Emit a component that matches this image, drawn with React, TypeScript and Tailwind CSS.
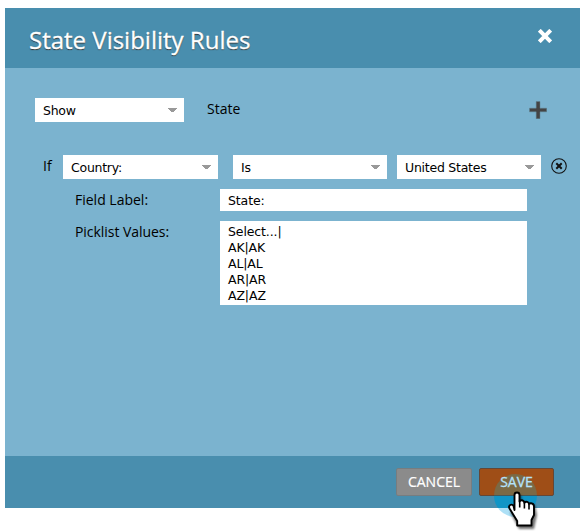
import React from "react";

function Select({ value, className }: { value: string; className: string }) {
  return (
    <div className={`flex h-6 items-center justify-between bg-white pl-2 pr-[7px] ${className}`}>
      <span className="whitespace-pre pt-0.5 font-['DejaVu_Sans',Verdana,sans-serif] text-[12.5px] leading-4 tracking-[-0.25px]">{value}</span>
      <svg width="9" height="4" viewBox="0 0 9 4" className="shrink-0" shapeRendering="crispEdges">
        <path d="M0 0h9v1H8v1H7v1H6v1H3V3H2V2H1V1H0z" fill="#999" />
      </svg>
    </div>
  );
}

const picklist = ["Select...|", "AK|AK", "AL|AL", "AR|AR", "AZ|AZ"];

export default function App() {
  return (
    <div className="relative h-[532px] w-[586px] overflow-hidden bg-white pl-[5px] pt-2 font-['Open_Sans','Noto_Sans',sans-serif] text-black">
      <div className="flex h-[500px] w-[575px] flex-col bg-[#7bb3cf]">
        <header className="flex h-[60px] shrink-0 items-center justify-between bg-[#498eae] pl-6 pr-7">
          <h1 className="pt-1 text-[24px] leading-8 text-white [-webkit-text-stroke:0.3px_white] [text-shadow:0px_1px_1px_#333]">State Visibility Rules</h1>
          <svg width="14" height="14" viewBox="0 0 14 14" className="-mt-1">
            <path d="M2.7 2.7L11.3 11.3M11.3 2.7L2.7 11.3" stroke="white" strokeWidth="4" strokeLinecap="square" />
          </svg>
        </header>

        <main className="flex grow flex-col pl-[30px] pt-[30px] text-[14px] leading-5">
          <div className="flex h-6 items-start">
            <Select value="Show" className="w-[149px]" />
            <span className="ml-[23px] w-[322px] pt-px">State</span>
            <svg width="18" height="18" viewBox="0 0 18 18" className="mt-[3px]">
              <path d="M7.2 .5h3.8v6.7h6.7v3.6H11v6.9H7.2v-6.9H.5V7.2h6.7z" fill="#444" stroke="#60808f" strokeWidth="0.5" />
            </svg>
          </div>

          <div className="mt-[33px] flex h-6 items-start pl-2">
            <span className="w-5 pt-px">If</span>
            <Select value="Country:" className="w-[155px]" />
            <Select value="Is" className="ml-[15px] w-[154px]" />
            <Select value="United States" className="ml-2.5 w-36" />
            <svg width="16" height="16" viewBox="0 0 16 16" className="ml-2.5 mt-[3px]">
              <circle cx="8" cy="8" r="7.3" fill="none" stroke="#111" strokeWidth="1.1" />
              <path d="M6 6l4 4M10 6l-4 4" stroke="#111" strokeWidth="2" strokeLinecap="square" />
            </svg>
          </div>

          <div className="mt-2.5 flex h-[22px] pl-10">
            <span className="w-[145px] pt-px">Field Label:</span>
            <div className="h-[22px] w-[307px] bg-white pl-2 pt-1 font-['DejaVu_Sans',Verdana,sans-serif] text-[12.5px] leading-4 tracking-[-0.12px]">State:</div>
          </div>
          <div className="mt-2.5 flex pl-10">
            <span className="w-[145px] pt-px tracking-[-0.05px]">Picklist Values:</span>
            <div className="h-[84px] w-[307px] bg-white pl-2 pt-[3px] font-['DejaVu_Sans',Verdana,sans-serif] text-[12.5px] leading-4 tracking-[-0.12px]">
              {picklist.map((item) => <div key={item}>{item}</div>)}
            </div>
          </div>
        </main>

        <footer className="flex h-[52px] shrink-0 justify-end gap-[7px] bg-[#498eae] pr-[26px] pt-3 text-[14px] leading-[26px] text-white">
          <button className="h-7 w-[76px] rounded-[2px] border border-[#777d80] bg-[#8b8b8b] leading-[26px] [-webkit-text-stroke:0.2px_white]">CANCEL</button>
          <button className="h-7 w-[75px] rounded-[2px] border border-[#644736] bg-[#9f4e17] leading-[26px]">
            <span className="relative z-10 text-[#b4e2fb] [-webkit-text-stroke:0.3px_#b4e2fb]">SAVE</span>
          </button>
        </footer>
      </div>

      <svg width="60" height="72" viewBox="485 460 60 72" className="pointer-events-none absolute left-[485px] top-[460px]">
        <defs>
          <clipPath id="halo"><circle cx="515.5" cy="495.5" r="21.5" /></clipPath>
          <filter id="soft" x="-30%" y="-30%" width="170%" height="170%"><feGaussianBlur stdDeviation="1.3" /></filter>
        </defs>
        <g clipPath="url(#halo)">
          <rect x="490" y="470" width="55" height="25" fill="#7b6945" />
          <rect x="490" y="495" width="55" height="1" fill="#44595a" />
          <rect x="490" y="496" width="55" height="12" fill="#1095c6" />
          <rect x="490" y="508" width="55" height="15" fill="#ade0f6" />
        </g>
        <path d="M514 493h5l1 7 13 3 2 10-3 14h-15l-9-17 6-1z" transform="translate(2 2)" fill="#000" opacity=".55" filter="url(#soft)" />
        <path d="M514.5 510v-15q0-2.5 2.5-2.5t2.5 2.5v6.5q1.2-1.8 3.2-1 1.6.5 1.6 2.3 1.2-1.5 3-1 1.7.5 1.7 2.4 1.2-1.3 3-.7 2 .6 2 3v8.5l-2.5 5v5.5h-14.3v-4.5l-7.7-12.5q-1.2-2.3.7-3.5 2-1 3.3.8z" fill="white" stroke="black" strokeWidth="1.9" strokeLinejoin="round" />
        <path d="M519.7 500.5v7M524.4 502.5v6M529 504.5v5" fill="none" stroke="black" strokeWidth="1.6" />
      </svg>
    </div>
  );
}
